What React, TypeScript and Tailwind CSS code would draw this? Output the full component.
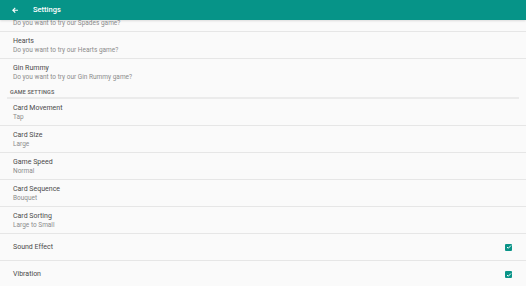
const games = [
  { title: "Spades", sub: "Do you want to try our Spades game?" },
  { title: "Hearts", sub: "Do you want to try our Hearts game?" },
  { title: "Gin Rummy", sub: "Do you want to try our Gin Rummy game?" },
];

const settings = [
  { title: "Card Movement", sub: "Tap" },
  { title: "Card Size", sub: "Large" },
  { title: "Game Speed", sub: "Normal" },
  { title: "Card Sequence", sub: "Bouquet" },
  { title: "Card Sorting", sub: "Large to Small" },
];

const toggles = ["Sound Effect", "Vibration"];

function Row({ title, sub, last }: { title: string; sub: string; last?: boolean }) {
  return (
    <div className={`h-[27px] pl-[13px] pt-[5px] ${last ? "" : "border-b border-[#e6e6e6]"}`}>
      <p className="text-[7px] leading-[9px] text-[#4a4a4a]">{title}</p>
      <p className="text-[6.5px] leading-[9px] text-[#8c8c8c]">{sub}</p>
    </div>
  );
}

function Check() {
  return (
    <div className="w-[7px] h-[7px] rounded-[1px] bg-[#0a9488] flex items-center justify-center">
      <svg width="6" height="6" viewBox="0 0 24 24" fill="none" stroke="white" strokeWidth="4">
        <path d="M4 12l5 5L20 6" />
      </svg>
    </div>
  );
}

export default function App() {
  return (
    <div
      className="w-[526px] h-[286px] overflow-hidden bg-[#fafafa]"
      style={{ fontFamily: "Roboto, 'Noto Sans', sans-serif" }}
    >
      <header className="relative z-10 h-[20px] bg-[#069488] flex items-center pl-[11.5px] shadow-[0_1px_2px_rgba(0,0,0,0.12)]">
        <svg width="6.5" height="6.5" viewBox="0 0 24 24" fill="none" stroke="white" strokeWidth="4">
          <path d="M22 12H4M12 3l-9 9 9 9" />
        </svg>
        <span className="ml-[15px] text-[7.5px] font-medium text-white">Settings</span>
      </header>

      <div className="-mt-[15px]">
        {games.map((g, i) => (
          <Row key={g.title} title={g.title} sub={g.sub} last={i === games.length - 1} />
        ))}

        <div className="px-[7px]">
          <p className="pl-[3px] pt-[2px] text-[5.5px] leading-[9px] font-medium tracking-[0.15px] text-[#5a5a5a]">
            GAME SETTINGS
          </p>
          <div className="h-[2px] bg-[#ebebeb]" />
        </div>

        {settings.map((s) => (
          <Row key={s.title} title={s.title} sub={s.sub} />
        ))}

        {toggles.map((t, i) => (
          <div
            key={t}
            className={`h-[27px] pl-[13px] pr-[14px] flex items-center justify-between ${
              i === 0 ? "border-b border-[#e6e6e6]" : ""
            }`}
          >
            <span className="text-[7px] text-[#4a4a4a]">{t}</span>
            <Check />
          </div>
        ))}
      </div>
    </div>
  );
}
